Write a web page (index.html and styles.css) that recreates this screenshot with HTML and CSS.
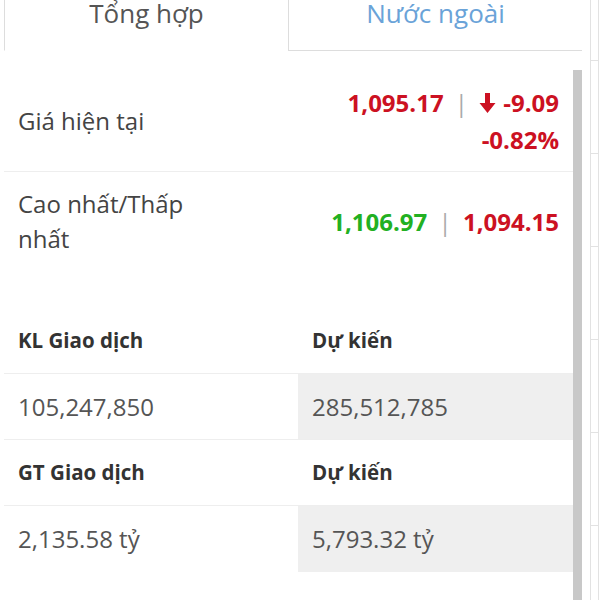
FILE: index.html
```html
<!DOCTYPE html>
<html lang="vi">
<head>
  <meta charset="UTF-8">
  <meta name="viewport" content="width=device-width, initial-scale=1.0">
  <link rel="stylesheet" href="styles.css">
</head>
<body>
  <div class="widget">
    <div class="tabs">
      <div class="tab active">Tổng hợp</div>
      <div class="tab">Nước ngoài</div>
    </div>
    <div class="content">
      <div class="panel">
        <div class="row">
          <div class="label">Giá hiện tại</div>
          <div class="value">
            <div>
              <span class="down">1,095.17</span>
              <span class="sep">|</span>
              <span class="down">
                <svg class="arrow" width="17" height="20" viewBox="0 0 17 20">
                  <path d="M6 0h5v10h5.5l-8 10-8-10h5.5z" fill="#cc1122"/>
                </svg>-9.09</span>
            </div>
            <div class="down">-0.82%</div>
          </div>
        </div>
        <div class="row last">
          <div class="label narrow">Cao nhất/Thấp nhất</div>
          <div class="value">
            <span class="up">1,106.97</span>
            <span class="sep">|</span>
            <span class="down">1,094.15</span>
          </div>
        </div>

        <div class="table">
          <div class="cell head">KL Giao dịch</div>
          <div class="cell head">Dự kiến</div>
          <div class="cell">105,247,850</div>
          <div class="cell shade">285,512,785</div>
          <div class="cell head">GT Giao dịch</div>
          <div class="cell head">Dự kiến</div>
          <div class="cell end">2,135.58 tỷ</div>
          <div class="cell shade end">5,793.32 tỷ</div>
        </div>
      </div>
      <div class="scrollbar"></div>
    </div>
  </div>
  <div class="side">
    <div class="side-cell"></div>
    <div class="side-cell"></div>
    <div class="side-cell"></div>
    <div class="side-cell"></div>
    <div class="side-cell"></div>
    <div class="side-cell"></div>
    <div class="side-cell"></div>
  </div>
</body>
</html>
```

FILE: styles.css
```css
body {
  font-family: 'Open Sans', 'Noto Sans', sans-serif;
  margin: 0;
  padding: 0;
  display: flex;
  height: 600px;
  overflow: hidden;
  background-color: #ffffff;
  color: #444;
}

.widget {
  width: 582px;
  display: flex;
  flex-direction: column;
}

.tabs {
  display: flex;
  margin-left: 4px;
  height: 51px;
}

.tab {
  flex: 1;
  text-align: center;
  font-size: 26px;
  line-height: 26px;
  color: #6aa3d8;
  border-left: 1px solid #dddddd;
  border-bottom: 1px solid #dddddd;
  box-sizing: border-box;
}

.tab.active {
  color: #555;
  border-bottom-color: transparent;
  flex: 0 0 284px;
}

.content {
  display: flex;
  flex: 1;
}

.panel {
  width: 569px;
  margin-left: 4px;
  padding-top: 19px;
}

.scrollbar {
  width: 9px;
  margin-top: 19px;
  background-color: #c8c8c8;
}

.row {
  display: flex;
  justify-content: space-between;
  align-items: center;
  height: 101px;
  padding: 0 14px;
  border-bottom: 1px solid #eeeeee;
  font-size: 24px;
  line-height: 37px;
}

.row.last {
  height: 98px;
  padding-bottom: 2px;
  border-bottom: none;
}

.label {
  color: #444;
  line-height: 35px;
}

.label.narrow {
  width: 190px;
}

.value {
  text-align: right;
  font-weight: bold;
}

.down {
  color: #cc1122;
}

.up {
  color: #22b022;
}

.sep {
  color: #aaa;
  font-weight: normal;
  margin: 0 5px;
}

.arrow {
  vertical-align: -1px;
  margin-right: 7px;
}

.table {
  display: grid;
  grid-template-columns: 294px 275px;
  margin-top: 36px;
}

.cell {
  height: 65px;
  line-height: 65px;
  padding-left: 14px;
  font-size: 24px;
  color: #555;
  border-bottom: 1px solid #eeeeee;
}

.cell.head {
  font-size: 20.5px;
  font-weight: bold;
  color: #333;
}

.cell.shade {
  background-color: #efefef;
}

.cell.end {
  border-bottom-color: transparent;
}

.side {
  margin-left: 8px;
  width: 7px;
  border-left: 1px solid #e2e2e2;
  border-right: 1px solid #e2e2e2;
  padding-top: 60px;
}

.side-cell {
  height: 92px;
  border-top: 1px solid #e2e2e2;
}
```
